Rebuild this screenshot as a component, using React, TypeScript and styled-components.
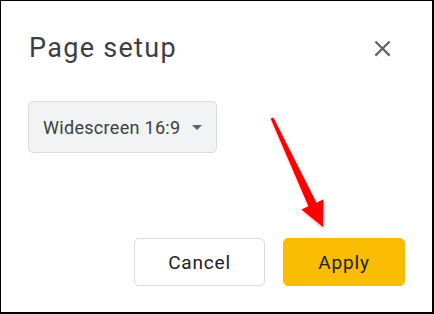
import React from "react";
import styled, { createGlobalStyle } from "styled-components";

const GlobalStyle = createGlobalStyle`
  html, body {
    margin: 0;
    padding: 0;
    background: #ffffff;
  }

  * {
    box-sizing: border-box;
  }
`;

export default function App(): JSX.Element {
  return (
    <>
      <GlobalStyle />
      <Frame>
        <Dialog>
          <Header>
            <Title>Page setup</Title>
            <CloseButton aria-label="Close">
              <svg width="27" height="27" viewBox="0 0 24 24">
                <path
                  fill="#5f6368"
                  d="M19 6.41L17.59 5 12 10.59 6.41 5 5 6.41 10.59 12 5 17.59 6.41 19 12 13.41 17.59 19 19 17.59 13.41 12z"
                />
              </svg>
            </CloseButton>
          </Header>

          <Select>
            <SelectLabel>Widescreen 16:9</SelectLabel>
            <Caret />
          </Select>

          <Actions>
            <Button>Cancel</Button>
            <Button primary>Apply</Button>
          </Actions>
        </Dialog>

        <Pointer width="434" height="314" viewBox="0 0 434 314">
          <defs>
            <filter id="shade" x="-20%" y="-20%" width="140%" height="140%">
              <feDropShadow dx="1" dy="2" stdDeviation="1.5" floodColor="#000" floodOpacity="0.25" />
            </filter>
          </defs>
          <polygon
            fill="#ff0000"
            filter="url(#shade)"
            points="273.4,117.4 316.5,202.8 323.5,199.2 323,227 301.4,209.5 308.4,206.2 270.6,118.6"
          />
        </Pointer>
      </Frame>
    </>
  );
}

const Frame = styled.div`
  position: relative;

  width: 434px;
  height: 314px;
  border-style: solid;
  border-color: #000000;
  border-width: 1px 2px 2px 1px;

  background: #ffffff;
`;

const Dialog = styled.div`
  display: flex;
  flex-direction: column;

  height: 100%;
  padding: 31px 27px 26px 27px;

  font-family: Roboto, "Liberation Sans", sans-serif;
  color: #3c4043;
`;

const Header = styled.div`
  display: flex;
  align-items: center;
  justify-content: space-between;

  padding-right: 9px;
`;

const Title = styled.h2`
  margin: 0 0 0 1px;

  font-size: 27px;
  font-weight: 400;
  line-height: 32px;
  letter-spacing: 1.3px;
  color: #3c4043;
`;

const CloseButton = styled.button`
  display: flex;

  padding: 0;
  border: none;

  background: none;
`;

const Select = styled.div`
  display: flex;
  align-items: center;
  gap: 10px;

  width: 189px;
  height: 52px;
  margin-top: 37px;
  padding: 0 14px 0 14px;
  border: 1px solid #dadce0;
  border-radius: 5px;

  background: #f1f3f4;
`;

const SelectLabel = styled.span`
  font-size: 18px;
  letter-spacing: 0.3px;
  color: #3c4043;
  white-space: nowrap;
`;

const Caret = styled.span`
  width: 0;
  height: 0;
  margin-left: auto;
  border-left: 5px solid transparent;
  border-right: 5px solid transparent;
  border-top: 5px solid #5f6368;
`;

const Actions = styled.div`
  display: flex;
  justify-content: flex-end;
  gap: 18px;

  margin-top: auto;
`;

const Button = styled.button<{ primary?: boolean }>`
  display: flex;
  align-items: center;
  justify-content: center;

  width: ${(p) => (p.primary ? "122px" : "131px")};
  height: 48px;
  border: 1px solid ${(p) => (p.primary ? "#fbbc04" : "#dadce0")};
  border-radius: 5px;

  font-family: Roboto, "Liberation Sans", sans-serif;
  font-size: 19px;
  font-weight: 400;
  letter-spacing: 0.8px;
  color: #202124;

  background: ${(p) => (p.primary ? "#fbbc04" : "#ffffff")};
`;

const Pointer = styled.svg`
  position: absolute;
  top: -1px;
  left: -1px;

  pointer-events: none;
`;
